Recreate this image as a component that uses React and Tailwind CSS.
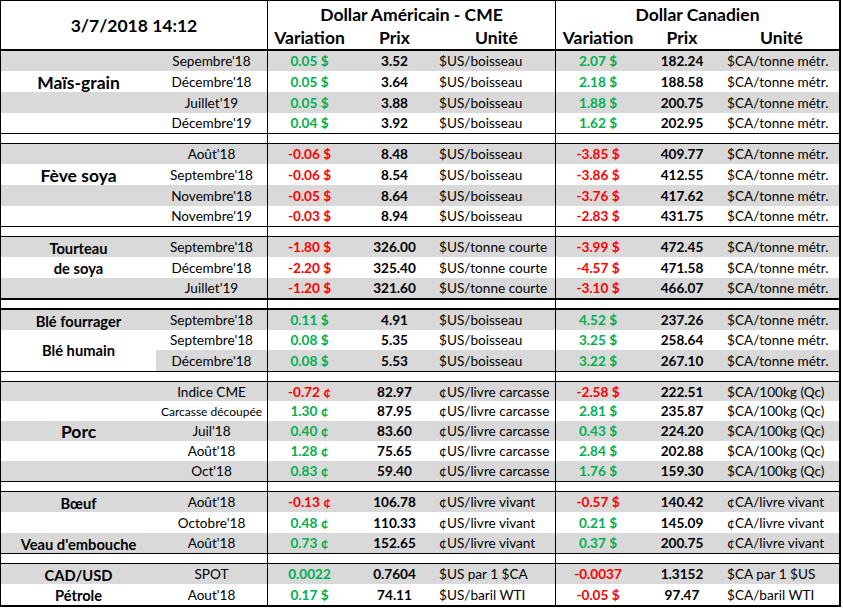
import React from 'react';

// Excel-style daily grain/livestock price sheet
const COLS = 'grid grid-cols-[155px_111px_84px_87px_117px_85px_84px_115px]';
const GRAY = 'bg-[#d9d9d9]';
const G = 'text-[#00b050]';
const R = 'text-[#ff0000]';

const GROUPS = [
  {
    rows: 'grid-rows-[20px_21px_21px_20px]',
    sep: 'border-b',
    spacer: 'h-[10px] border-b',
    items: [
      { gray: true, m: "Sepembre'18", uv: '0.05 $', uc: G, up: '3.52', uu: '$US/boisseau', cv: '2.07 $', cc: G, cp: '182.24', cu: '$CA/tonne métr.' },
      { label: 'Maïs-grain', big: true, m: "Décembre'18", uv: '0.05 $', uc: G, up: '3.64', uu: '$US/boisseau', cv: '2.18 $', cc: G, cp: '188.58', cu: '$CA/tonne métr.' },
      { gray: true, m: "Juillet'19", uv: '0.05 $', uc: G, up: '3.88', uu: '$US/boisseau', cv: '1.88 $', cc: G, cp: '200.75', cu: '$CA/tonne métr.' },
      { m: "Décembre'19", uv: '0.04 $', uc: G, up: '3.92', uu: '$US/boisseau', cv: '1.62 $', cc: G, cp: '202.95', cu: '$CA/tonne métr.' },
    ],
  },
  {
    rows: 'grid-rows-[20px_21px_21px_20px]',
    sep: 'border-b',
    spacer: 'h-[10px] border-b',
    items: [
      { gray: true, m: "Août'18", uv: '-0.06 $', uc: R, up: '8.48', uu: '$US/boisseau', cv: '-3.85 $', cc: R, cp: '409.77', cu: '$CA/tonne métr.' },
      { label: 'Fève soya', big: true, m: "Septembre'18", uv: '-0.06 $', uc: R, up: '8.54', uu: '$US/boisseau', cv: '-3.86 $', cc: R, cp: '412.55', cu: '$CA/tonne métr.' },
      { gray: true, m: "Novembre'18", uv: '-0.05 $', uc: R, up: '8.64', uu: '$US/boisseau', cv: '-3.76 $', cc: R, cp: '417.62', cu: '$CA/tonne métr.' },
      { m: "Novembre'19", uv: '-0.03 $', uc: R, up: '8.94', uu: '$US/boisseau', cv: '-2.83 $', cc: R, cp: '431.75', cu: '$CA/tonne métr.' },
    ],
  },
  {
    rows: 'grid-rows-[20px_21px_20px]',
    sep: 'border-b-2',
    spacer: 'h-[10px] border-b-2',
    items: [
      { gray: true, label: 'Tourteau', m: "Septembre'18", uv: '-1.80 $', uc: R, up: '326.00', uu: '$US/tonne courte', cv: '-3.99 $', cc: R, cp: '472.45', cu: '$CA/tonne métr.' },
      { label: 'de soya', m: "Décembre'18", uv: '-2.20 $', uc: R, up: '325.40', uu: '$US/tonne courte', cv: '-4.57 $', cc: R, cp: '471.58', cu: '$CA/tonne métr.' },
      { gray: true, m: "Juillet'19", uv: '-1.20 $', uc: R, up: '321.60', uu: '$US/tonne courte', cv: '-3.10 $', cc: R, cp: '466.07', cu: '$CA/tonne métr.' },
    ],
  },
  {
    rows: 'grid-rows-[20px_20px_21px]',
    sep: 'border-b',
    spacer: 'h-[10px] border-b',
    items: [
      { gray: true, label: 'Blé fourrager', m: "Septembre'18", uv: '0.11 $', uc: G, up: '4.91', uu: '$US/boisseau', cv: '4.52 $', cc: G, cp: '237.26', cu: '$CA/tonne métr.' },
      { label: 'Blé humain', span: true, m: "Septembre'18", uv: '0.08 $', uc: G, up: '5.35', uu: '$US/boisseau', cv: '3.25 $', cc: G, cp: '258.64', cu: '$CA/tonne métr.' },
      { gray: true, noLabel: true, m: "Décembre'18", uv: '0.08 $', uc: G, up: '5.53', uu: '$US/boisseau', cv: '3.22 $', cc: G, cp: '267.10', cu: '$CA/tonne métr.' },
    ],
  },
  {
    rows: 'grid-rows-[19px_20px_20px_20px_20px]',
    sep: 'border-b',
    spacer: 'h-[10px] border-b',
    items: [
      { gray: true, m: 'Indice CME', uv: '-0.72 ¢', uc: R, up: '82.97', uu: '¢US/livre carcasse', cv: '-2.58 $', cc: R, cp: '222.51', cu: '$CA/100kg (Qc)' },
      { m: 'Carcasse découpée', small: true, uv: '1.30 ¢', uc: G, up: '87.95', uu: '¢US/livre carcasse', cv: '2.81 $', cc: G, cp: '235.87', cu: '$CA/100kg (Qc)' },
      { gray: true, label: 'Porc', big: true, m: "Juil'18", uv: '0.40 ¢', uc: G, up: '83.60', uu: '¢US/livre carcasse', cv: '0.43 $', cc: G, cp: '224.20', cu: '$CA/100kg (Qc)' },
      { m: "Août'18", uv: '1.28 ¢', uc: G, up: '75.65', uu: '¢US/livre carcasse', cv: '2.84 $', cc: G, cp: '202.88', cu: '$CA/100kg (Qc)' },
      { gray: true, m: "Oct'18", uv: '0.83 ¢', uc: G, up: '59.40', uu: '¢US/livre carcasse', cv: '1.76 $', cc: G, cp: '159.30', cu: '$CA/100kg (Qc)' },
    ],
  },
  {
    rows: 'grid-rows-[20px_21px_20px]',
    sep: 'border-b',
    spacer: 'h-[10px] border-b',
    items: [
      { gray: true, label: 'Bœuf', m: "Août'18", uv: '-0.13 ¢', uc: R, up: '106.78', uu: '¢US/livre vivant', cv: '-0.57 $', cc: R, cp: '140.42', cu: '¢CA/livre vivant' },
      { m: "Octobre'18", uv: '0.48 ¢', uc: G, up: '110.33', uu: '¢US/livre vivant', cv: '0.21 $', cc: G, cp: '145.09', cu: '¢CA/livre vivant' },
      { gray: true, label: "Veau d'embouche", m: "Août'18", uv: '0.73 ¢', uc: G, up: '152.65', uu: '¢US/livre vivant', cv: '0.37 $', cc: G, cp: '200.75', cu: '¢CA/livre vivant' },
    ],
  },
  {
    rows: 'grid-rows-[20px_21px]',
    sep: '',
    spacer: null,
    items: [
      { gray: true, label: 'CAD/USD', m: 'SPOT', uv: '0.0022', uc: G, up: '0.7604', uu: '$US par 1 $CA', cv: '-0.0037', cc: R, cp: '1.3152', cu: '$CA par 1 $US' },
      { label: 'Pétrole', m: "Aout'18", uv: '0.17 $', uc: G, up: '74.11', uu: '$US/baril WTI', cv: '-0.05 $', cc: R, cp: '97.47', cu: '$CA/baril WTI' },
    ],
  },
];

function Cells({ r }) {
  const bg = r.gray ? GRAY : 'bg-white';
  const cell = 'flex items-center pt-[2px] ' + bg;
  return (
    <>
      {!r.noLabel && (
        <div className={'flex items-center justify-center font-bold ' +
          (r.span ? 'row-span-2 bg-white text-[14.7px] ' : cell + ' ') +
          (r.big ? 'text-[17.5px]' : 'text-[14.7px]')}>
          {r.label}
        </div>
      )}
      <div className={cell + ' justify-center ' + (r.small ? 'text-[12px]' : 'text-[13.6px]')}>{r.m}</div>
      <div className={cell + ' justify-center border-l border-black font-bold text-[13.6px] ' + r.uc}>{r.uv}</div>
      <div className={cell + ' justify-center font-bold text-[13.6px]'}>{r.up}</div>
      <div className={cell + ' pl-[1px] text-[13.6px]'}>{r.uu}</div>
      <div className={cell + ' justify-center border-l border-black font-bold text-[13.6px] ' + r.cc}>{r.cv}</div>
      <div className={cell + ' justify-center font-bold text-[13.6px]'}>{r.cp}</div>
      <div className={cell + ' pl-[3px] text-[13.6px]'}>{r.cu}</div>
    </>
  );
}

function Spacer({ cls }) {
  return (
    <div className={'flex border-black ' + cls}>
      <div className="w-[266px]" />
      <div className="w-[288px] border-l border-black" />
      <div className="flex-1 border-l border-black" />
    </div>
  );
}

export default function App() {
  return (
    <div className="bg-white w-[843px] h-[608px] text-black leading-none [font-family:Lato,'Open_Sans',sans-serif]">
      <div className="w-[841px] border-l border-t border-r-2 border-b-2 border-black">
        {/* Header */}
        <div className={COLS + ' grid-rows-[25px_23px] border-b-2 border-black'}>
          <div className="col-span-2 row-span-2 flex items-center justify-center pt-[2px] font-bold text-[17.5px]">3/7/2018 14:12</div>
          <div className="col-span-3 border-l border-black flex items-center justify-center pt-[2px] font-bold text-[17.5px]">Dollar Américain - CME</div>
          <div className="col-span-3 border-l border-black flex items-center justify-center pt-[2px] font-bold text-[17.5px]">Dollar Canadien</div>
          <div className="border-l border-black flex items-center justify-center pt-[1px] font-bold text-[17.5px]">Variation</div>
          <div className="flex items-center justify-center pt-[1px] font-bold text-[17.5px]">Prix</div>
          <div className="flex items-center justify-center pt-[1px] font-bold text-[17.5px]">Unité</div>
          <div className="border-l border-black flex items-center justify-center pt-[1px] font-bold text-[17.5px]">Variation</div>
          <div className="flex items-center justify-center pt-[1px] font-bold text-[17.5px]">Prix</div>
          <div className="flex items-center justify-center pt-[1px] font-bold text-[17.5px]">Unité</div>
        </div>

        {GROUPS.map((g, i) => (
          <React.Fragment key={i}>
            <div className={COLS + ' border-black ' + g.rows + ' ' + g.sep}>
              {g.items.map((r, j) => <Cells key={j} r={r} />)}
            </div>
            {g.spacer && <Spacer cls={g.spacer} />}
          </React.Fragment>
        ))}
      </div>
    </div>
  );
}
